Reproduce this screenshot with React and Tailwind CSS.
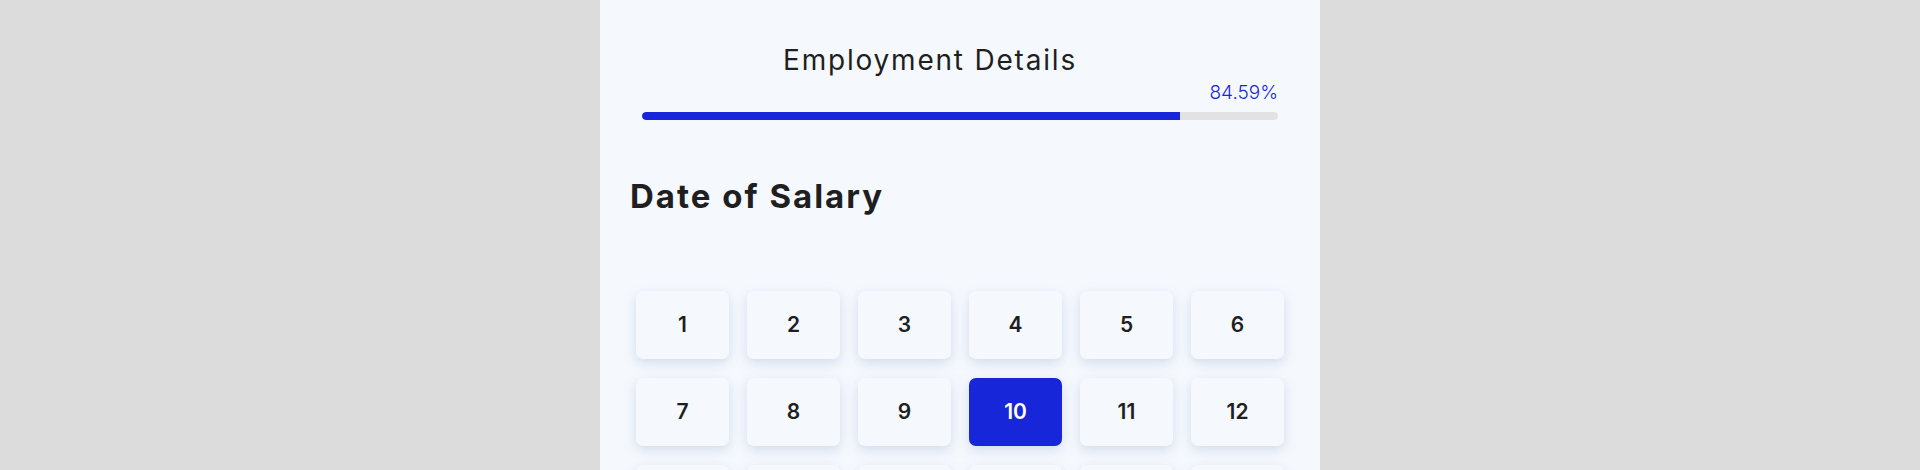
import React from "react";

const days = Array.from({ length: 31 }, (_, i) => i + 1);

export default function App() {
  return (
    <div
      className="min-h-screen w-full bg-[#dcdcdc] flex justify-center"
      style={{ fontFamily: "Inter, 'Noto Sans', sans-serif" }}
    >
      <div className="w-[720px] bg-[#f5f9fe] min-h-screen">
        <div className="px-[42px] pt-[43px]">
          <div className="pr-[60px] text-center text-[28px] leading-[34px] tracking-[1.8px] text-[#1f1f1f] font-normal">
            Employment Details
          </div>
          <div className="mt-[4px] text-right text-[19px] leading-[24px] text-[#1a26dc] font-light">
            84.59%
          </div>
          <div className="mt-[7px] h-[8px] w-full rounded-full bg-[#e2e2e2] overflow-hidden">
            <div className="h-full rounded-l-full bg-[#1726d9]" style={{ width: "84.59%" }} />
          </div>
        </div>
        <h1 className="mt-[56px] pl-[30px] text-[33px] leading-[40px] tracking-[2px] font-bold text-[#1f1f1f]">
          Date of Salary
        </h1>
        <div className="mt-[75px] px-[36px] grid grid-cols-6 gap-x-[18px] gap-y-[19px]">
          {days.map((d) => (
            <button
              key={d}
              className={
                d === 10
                  ? "h-[68px] rounded-[7px] bg-[#1726d9] text-white text-[21px] font-semibold flex items-center justify-center shadow-[0_4px_12px_rgba(170,185,210,0.45)]"
                  : "h-[68px] rounded-[7px] bg-[#f5f9fe] text-[#1f1f1f] text-[21px] font-semibold flex items-center justify-center shadow-[0_4px_12px_rgba(170,185,210,0.45)]"
              }
            >
              {d}
            </button>
          ))}
        </div>
      </div>
    </div>
  );
}
